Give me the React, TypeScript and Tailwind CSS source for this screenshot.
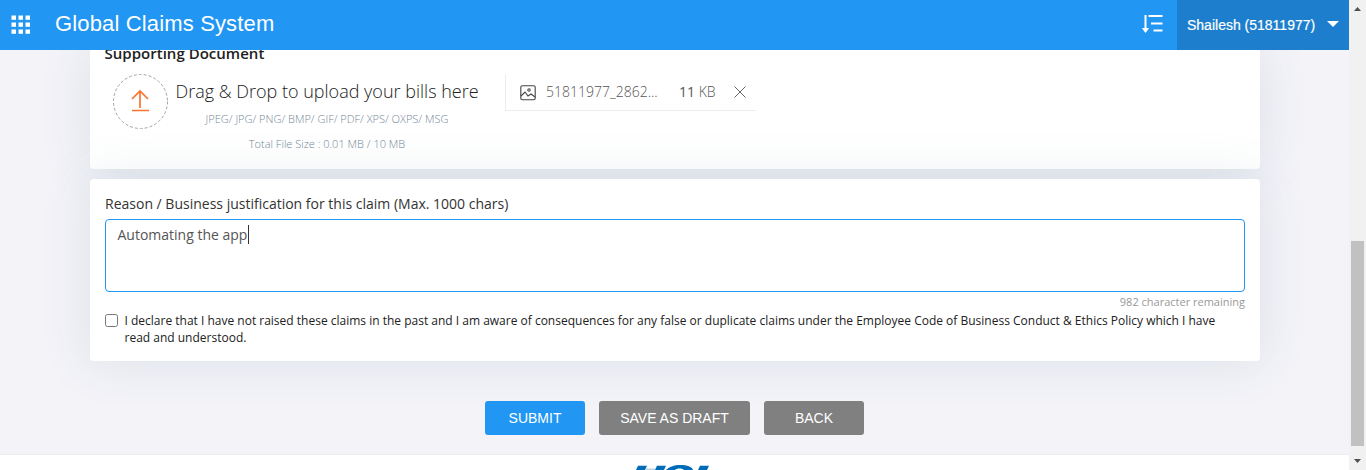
import type { ReactNode } from 'react';

function ActionButton({ className, children }: { className: string; children: ReactNode }) {
  return (
    <button className={`h-[34px] rounded-[3px] font-['Liberation_Sans',Arial,sans-serif] text-sm text-white ${className}`}>
      {children}
    </button>
  );
}

function Header() {
  return (
    <header className="relative z-10 flex h-[50px] shrink-0 bg-[#2196f3] font-['Liberation_Sans',Arial,sans-serif] text-white">
      <div className="flex flex-1 items-center">
        <svg width="20" height="20" viewBox="0 0 20 20" className="-mt-px ml-[11px] shrink-0" fill="currentColor">
          {[0.5, 7.5, 14.5].map((y) => [0.5, 7.5, 14.5].map((x) => <rect key={`${x}-${y}`} x={x} y={y} width="4.5" height="4.300" />))}
        </svg>
        <h1 className="-mt-[3px] ml-[24px] text-[22px] leading-7 tracking-[0.15px] whitespace-nowrap">Global Claims System</h1>
      </div>
      <svg width="22" height="20" viewBox="0 0 22 20" className="mt-[14px] mr-[14px]" fill="none" stroke="currentColor" strokeWidth="2">
        <path d="M4.500 1v15M7.500 2h14M10 9.500h11.500M12.500 16.500h9" />
        <path d="M.8 14h7.400L4.500 19z" fill="currentColor" stroke="none" />
      </svg>
      <div className="flex w-[172px] items-center bg-[#1c7ecd] pl-[10px]">
        <span className="text-[14px] whitespace-nowrap [-webkit-text-stroke:0.2px_white]">Shailesh (51811977)</span>
        <svg width="12" height="6" viewBox="0 0 12 6" className="-mt-[2px] ml-[12px]" fill="currentColor">
          <path d="M0 0h12L6 6z" />
        </svg>
      </div>
    </header>
  );
}

function Scrollbar() {
  return (
    <div className="flex w-[17px] shrink-0 flex-col items-center bg-[#f1f1f1]">
      <svg width="7" height="4" viewBox="0 0 7 4" className="mt-[7px]" fill="#505050">
        <path d="M0 4h7L3.500 0z" />
      </svg>
      <div className="mt-[230px] h-[205px] w-[13px] bg-[#c1c1c1]" />
      <svg width="7" height="4" viewBox="0 0 7 4" className="mt-[13px]" fill="#505050">
        <path d="M0 0h7L3.500 4z" />
      </svg>
    </div>
  );
}

export default function App() {
  return (
    <div className="flex h-[470px] w-[1366px] overflow-hidden bg-[#f3f3f8] font-['Open_Sans','Noto_Sans',sans-serif] text-[#212121]">
      <div className="flex w-[1349px] flex-col overflow-hidden">
        <Header />
        <main className="flex h-[404px] shrink-0 flex-col pr-[89px] pl-[90px]">
          <section className="h-[119px] shrink-0 rounded-b-[4px] bg-white shadow-[0_0_50px_rgba(69,110,130,0.13)]">
            <h2 className="-mt-[8px] ml-[14.5px] h-[22px] text-[15px] leading-[22px] font-semibold tracking-[0.02px]">Supporting Document</h2>
            <div className="flex">
              <svg width="55" height="55" viewBox="0 0 55 55" fill="none" className="mt-[10px] ml-[23px] shrink-0">
                <circle cx="27.500" cy="27.500" r="27" stroke="#a3a3a3" strokeDasharray="3 2" />
                <path d="M27 34V18M19 25l8-8 8 8M19 36.500h17" stroke="#f9732f" strokeWidth="1.700" />
              </svg>
              <div className="ml-[7.5px] w-[303px] text-center font-light whitespace-nowrap">
                <p className="mt-[14px] text-[18px] leading-[26px]">Drag &amp; Drop to upload your bills here</p>
                <p className="mt-[6px] text-[11px] leading-[18px] text-[#778899]">JPEG/ JPG/ PNG/ BMP/ GIF/ PDF/ XPS/ OXPS/ MSG</p>
                <p className="mt-[7px] text-[11px] leading-[18px] text-[#778899]">Total File Size : 0.01 MB / 10 MB</p>
              </div>
              <div className="mt-[10px] ml-[26.5px] flex h-[37px] w-[251px] items-center border-b border-l border-[#ececec] text-[14px] font-light text-[#555]">
                <svg width="16" height="16" viewBox="0 0 16 16" className="ml-[14px] mt-px" fill="none" stroke="#444" strokeWidth="1.100">
                  <rect x=".8" y=".8" width="14.400" height="14" rx="1.500" />
                  <circle cx="9" cy="5" r="1.200" />
                  <path d="m1 11 4-4 3 4 3-2 4 3" />
                </svg>
                <span className="-mt-px ml-[10px] w-[133px]">51811977_2862...</span>
                <span className="-mt-px w-[55px]"><span className="font-normal">11</span> KB</span>
                <svg width="12" height="12" viewBox="0 0 12 12" stroke="#666" fill="none"><path d="m.5.5 11 11M11.500.5l-11 11" /></svg>
              </div>
            </div>
          </section>

          <section className="mt-[10px] h-[182px] shrink-0 rounded-[4px] bg-white px-[15px] shadow-[0_0_50px_rgba(69,110,130,0.13)]">
            <label className="block pt-[15px] text-[14px] leading-5 text-[#333]">Reason / Business justification for this claim (Max. 1000 chars)</label>
            <div className="mt-[5px] flex h-[73px] rounded-[4px] border border-[#2196f3] pt-[5px] pl-[11.5px] text-[14px] leading-5 text-[#555]">
              <span>Automating the app</span>
              <span className="ml-[0.5px] h-[19px] w-px bg-[#333]" />
            </div>
            <p className="mt-[2px] text-right text-[11px] leading-4 text-[#999]">982 character remaining</p>
            <div className="mt-[2px] flex text-[12px] leading-[17px]">
              <span className="mt-[2px] mr-[6.5px] size-[13px] shrink-0 rounded-[2.500px] border border-[#767676]" />
              <p className="w-[1110px]">I declare that I have not raised these claims in the past and I am aware of consequences for any false or duplicate claims under the Employee Code of Business Conduct &amp; Ethics Policy which I have<br />read and understood.</p>
            </div>
          </section>

          <div className="mt-[40px] mr-px flex justify-center gap-[14px]">
            <ActionButton className="w-[100px] bg-[#2196f3]">SUBMIT</ActionButton>
            <ActionButton className="w-[151px] bg-[#808080]">SAVE AS DRAFT</ActionButton>
            <ActionButton className="w-[100px] bg-[#808080]">BACK</ActionButton>
          </div>
        </main>
        <footer className="flex h-[16px] shrink-0 justify-center border-t border-[#ececee] bg-white">
          <svg width="74" height="5" viewBox="0 0 74 5" className="mt-[10px] mr-[3px]" fill="#006bb6">
            <path d="M10 3.500h9V5h-9z" fill="#b9d5e9" />
            <path d="M2 .7h9L9 5H0zM21 .7h9L28 5h-9zM30 5c3-3 8-5 14.500-5S56 1.500 57 5h-9c-2-2-7-2-9 0zM64 .7h9L71 5h-9z" />
          </svg>
        </footer>
      </div>
      <Scrollbar />
    </div>
  );
}
